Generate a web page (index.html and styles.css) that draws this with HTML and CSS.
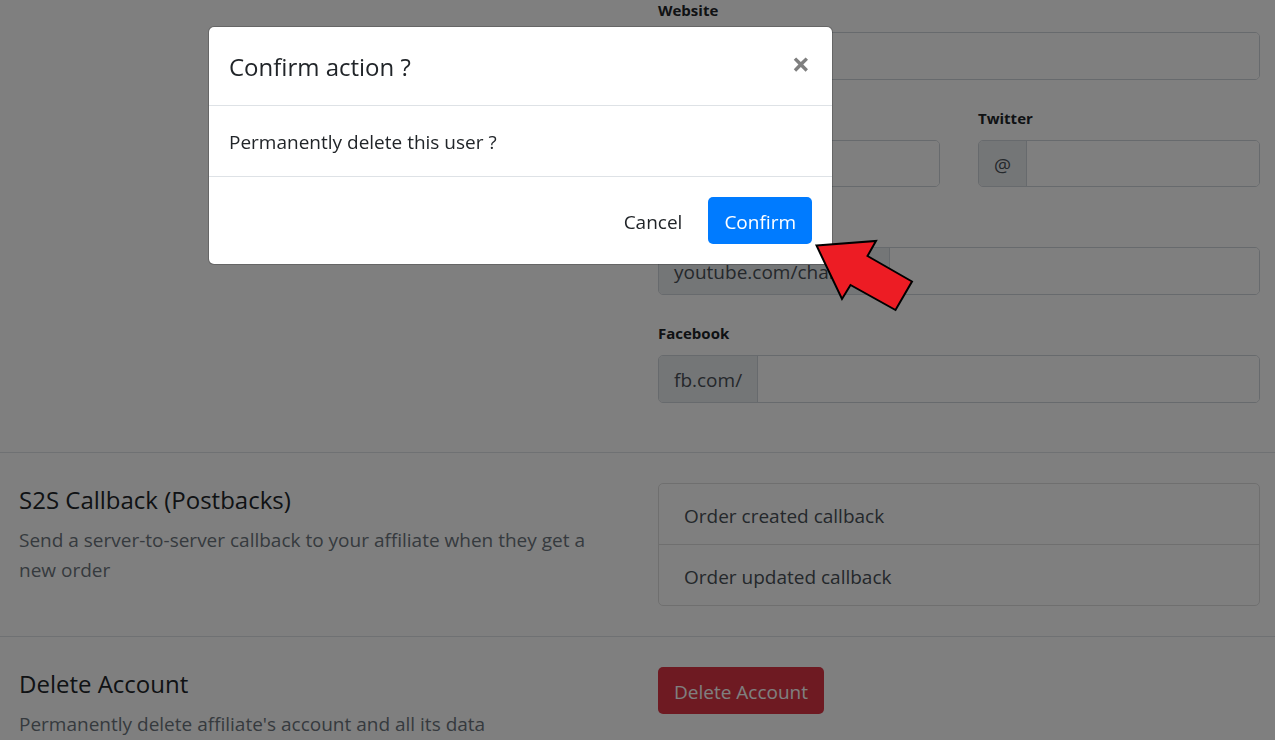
FILE: index.html
```
<!DOCTYPE html>
<html lang="en">
<head>
<meta charset="utf-8">
<meta name="viewport" content="width=device-width, initial-scale=1">
<title>Confirm action</title>
<link rel="stylesheet" href="styles.css">
</head>
<body>
<main class="page">
  <section class="section section-social">
    <div class="section-info"></div>
    <div class="fields">
      <div class="field field-wide">
        <label class="label" for="website">Website</label>
        <div class="group"><input class="input" id="website" type="text"></div>
      </div>
      <div class="field">
        <label class="label" for="instagram">&nbsp;</label>
        <div class="group"><input class="input" id="instagram" type="text" aria-label="Instagram"></div>
      </div>
      <div class="field">
        <label class="label" for="twitter">Twitter</label>
        <div class="group"><span class="addon">@</span><input class="input" id="twitter" type="text"></div>
      </div>
      <div class="field field-wide">
        <label class="label" for="youtube">&nbsp;</label>
        <div class="group"><span class="addon">youtube.com/channel/</span><input class="input" id="youtube" type="text" aria-label="YouTube"></div>
      </div>
      <div class="field field-wide">
        <label class="label" for="facebook">Facebook</label>
        <div class="group"><span class="addon">fb.com/</span><input class="input" id="facebook" type="text"></div>
      </div>
    </div>
  </section>

  <section class="section">
    <div class="section-info">
      <h2 class="title">S2S Callback (Postbacks)</h2>
      <p class="hint">Send a server-to-server callback to your affiliate when they get a new order</p>
    </div>
    <div class="list">
      <a class="list-item" href="#created">Order created callback</a>
      <a class="list-item" href="#updated">Order updated callback</a>
    </div>
  </section>

  <section class="section">
    <div class="section-info">
      <h2 class="title">Delete Account</h2>
      <p class="hint">Permanently delete affiliate's account and all its data</p>
    </div>
    <div><button class="btn btn-danger" type="button">Delete Account</button></div>
  </section>
</main>

<div class="backdrop">
  <div class="dialog" role="dialog" aria-modal="true" aria-labelledby="dialog-title">
    <header class="dialog-header">
      <h2 class="title" id="dialog-title">Confirm action ?</h2>
      <button class="close" type="button" aria-label="Close">×</button>
    </header>
    <p class="dialog-body">Permanently delete this user ?</p>
    <footer class="dialog-footer">
      <button class="btn btn-plain" type="button">Cancel</button>
      <button class="btn btn-primary" type="button">Confirm</button>
    </footer>
    <svg class="pointer" viewBox="0 0 104 78" width="104" height="78" aria-hidden="true">
      <path d="M4.500 9.500 64 5 55.500 20 100 45.500 83.500 74 38.500 49 30 63Z" fill="#ed1c24" stroke="#000" stroke-width="2"/>
    </svg>
  </div>
</div>
</body>
</html>
```
FILE: styles.css
```
* {
  box-sizing: border-box;
}

body {
  margin: 0;
  height: 100vh;
  overflow: hidden;
  background: #fff;
  color: #212529;
  font-family: "Open Sans", "Noto Sans", sans-serif;
  font-size: 19px;
  line-height: 30px;
}

h2,
p {
  margin: 0;
}

button,
input {
  font: inherit;
}

.section {
  display: grid;
  grid-template-columns: minmax(0, 1fr) minmax(0, 1fr);
  gap: 37px;
  align-items: start;
  padding: 30px 15px 30px 19px;
  border-top: 1px solid #dee2e6;
}

.section-social {
  padding-top: 0;
  padding-bottom: 49px;
  border-top: 0;
}

.title {
  padding-top: 1px;
  margin-bottom: 9px;
  font-size: 24px;
  font-weight: 400;
  line-height: 32px;
}

.hint {
  color: #6c757d;
}

.fields {
  display: grid;
  grid-template-columns: minmax(0, 1fr) minmax(0, 1fr);
  gap: 28px 38px;
}

.field-wide {
  grid-column: 1 / -1;
}

.label {
  display: block;
  margin-bottom: 12px;
  font-size: 15px;
  font-weight: 700;
  line-height: 20px;
}

.group {
  display: flex;
  height: 47px;
  border: 1px solid #ced4da;
  border-radius: 5px;
  overflow: hidden;
}

.field-wide .group {
  height: 48px;
}

.addon {
  display: flex;
  align-items: center;
  padding: 2px 15px 0;
  border-right: 1px solid #ced4da;
  background: #e9ecef;
  color: #495057;
}

.input {
  flex: 1;
  min-width: 0;
  padding: 0 15px;
  border: 0;
  background: #fff;
  color: #495057;
}

.list {
  border: 1px solid #dfdfdf;
  border-radius: 5px;
}

.list-item {
  display: block;
  padding: 17px 25px 13px;
  color: #495057;
  text-decoration: none;
}

.list-item + .list-item {
  border-top: 1px solid #dfdfdf;
}

.btn {
  padding: 10px 16px 7px;
  border: 0;
  border-radius: 5px;
  color: #fff;
}

.btn-danger {
  background: #dc3545;
}

.btn-primary {
  background: #007bff;
}

.btn-plain {
  background: transparent;
  color: #212529;
}

.backdrop {
  position: fixed;
  inset: 0;
  padding: 26px 16px 26px 208px;
  background: rgba(0, 0, 0, 0.5);
}

.dialog {
  position: relative;
  max-width: 625px;
  border: 1px solid rgba(0, 0, 0, 0.2);
  border-radius: 6px;
  background: #fff;
  background-clip: padding-box;
}

.dialog-header {
  display: flex;
  justify-content: space-between;
  align-items: flex-start;
  padding: 23px 20px 22px;
  border-bottom: 1px solid #dee2e6;
}

.dialog-header .title {
  margin: 0;
}

.close {
  padding: 0 2px;
  border: 0;
  background: transparent;
  color: #7f7f7f;
  font-size: 32px;
  font-weight: 700;
  line-height: 28px;
}

.dialog-body {
  padding: 21px 20px 19px;
}

.dialog-footer {
  display: flex;
  justify-content: flex-end;
  gap: 10px;
  padding: 20px;
  border-top: 1px solid #dee2e6;
}

.pointer {
  position: absolute;
  right: -84px;
  bottom: -50px;
}
```
